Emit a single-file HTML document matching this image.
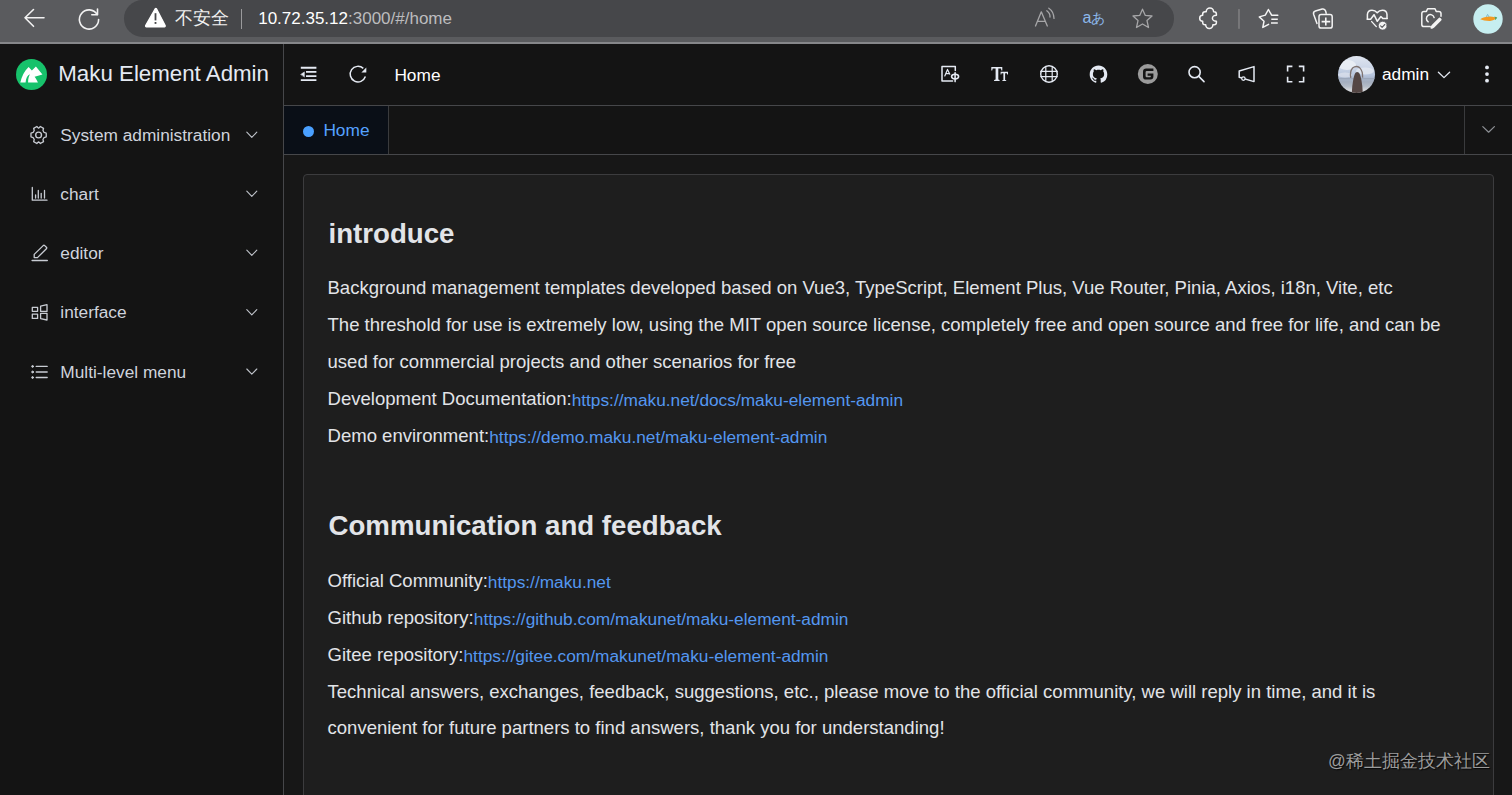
<!DOCTYPE html>
<html><head><meta charset="utf-8"><title>Maku Element Admin</title>
<style>
*{margin:0;padding:0;box-sizing:border-box}
html,body{width:1512px;height:795px;overflow:hidden;background:#141414}
body{position:relative;font-family:"Liberation Sans",sans-serif}
.a{position:absolute}
.t{position:absolute;white-space:nowrap}
svg{position:absolute;overflow:visible}
</style></head>
<body>
<div class="a" style="left:0;top:0;width:1512px;height:42px;background:#5a5b5e"></div>
<div class="a" style="left:0;top:42px;width:1512px;height:2px;background:#86878a"></div>
<svg style="left:0;top:0" width="1512" height="42" fill="none" stroke="#f2f2f2" stroke-width="1.6" stroke-linecap="round" stroke-linejoin="round"><path d="M25 17.8 H44 M25 17.8 L33.5 9.5 M25 17.8 L33.5 26.3"/><path d="M97.2 14.5 A9.6 9.6 0 1 0 98.6 19.5" /><path d="M97.5 9 V14.8 H91.8"/></svg>
<div class="a" style="left:124px;top:0px;width:1050px;height:36.8px;border-radius:18.4px;background:#46474a"></div>
<svg style="left:0;top:0" width="200" height="42"><path d="M155.3 8.6 Q155.8 8 156.4 8.6 L165.2 25.6 Q165.5 26.8 164.4 26.9 H146.4 Q145.3 26.8 145.6 25.6 Z" fill="#fff" stroke="#fff" stroke-width="1.2" stroke-linejoin="round"/><rect x="154.6" y="13.2" width="1.8" height="7.2" fill="#46474a"/><rect x="154.6" y="22" width="1.8" height="1.9" fill="#46474a"/></svg>
<div class="t" style="left:174.5px;top:6.46px;font-size:18px;line-height:25px;color:#f0f0f0;font-weight:normal;">不安全</div>
<div class="a" style="left:241px;top:9px;width:1.2px;height:19.5px;background:#9a9a9c"></div>
<div class="t" style="left:258.2px;top:7.21px;font-size:17px;line-height:24px;color:#bcbcbe;font-weight:normal;"><span style="color:#fff">10.72.35.12</span>:3000/#/home</div>
<svg style="left:0;top:0" width="1512" height="42" fill="none" stroke-linecap="round" stroke-linejoin="round"><path d="M1035.5 26 L1041.3 11.8 L1047.3 26 M1037.6 21.3 H1045.2" stroke="#a6a6a8" stroke-width="1.3"/><path d="M1046.8 10.8 Q1050.2 13.2 1050 17" stroke="#a6a6a8" stroke-width="1.3"/><path d="M1048.8 8.2 Q1053.8 11.6 1054 18.4" stroke="#a6a6a8" stroke-width="1.3"/><path d="M1142.5 9.2 L1145.3 15.4 L1152 16 L1147 20.6 L1148.5 27.5 L1142.5 24 L1136.5 27.5 L1138 20.6 L1133 16 L1139.7 15.4 Z" stroke="#a6a6a8" stroke-width="1.3"/><path d="M1202.7 14 Q1202.7 11.7 1205 11.7 H1206.2 A3.7 3.7 0 0 1 1213.6 11.7 H1214.1 Q1216.4 11.7 1216.4 14 V15.3 A4 3 0 0 0 1216.4 21.3 V22.5 Q1216.4 24.8 1214.1 24.8 H1212.9 A3.6 3.6 0 0 1 1205.7 24.8 H1205 Q1202.7 24.8 1202.7 22.5 V21.3 A3 3 0 0 1 1202.7 15.3 Z" stroke="#f4f4f4" stroke-width="1.5"/><path d="M1239 9.5 V28.3" stroke="#8a8a8c" stroke-width="1.2"/><path d="M1268.6 24.3 L1262.8 27.4 L1264 21.3 L1259.3 16.9 L1265.3 15.1 L1268.4 9.5 L1271.6 15.2 H1277.8" stroke="#f4f4f4" stroke-width="1.5"/><path d="M1271.3 19.2 H1277.8 M1271 23 H1277.8" stroke="#f4f4f4" stroke-width="1.6" stroke-linecap="butt"/><path d="M1317 23.4 L1313.6 14.2 Q1313 11.8 1315.4 11 L1322.2 9 Q1324.8 8.4 1325.6 11 L1326.2 13.2" stroke="#f4f4f4" stroke-width="1.5"/><rect x="1319" y="14.5" width="13.2" height="13.6" rx="2.2" stroke="#f4f4f4" stroke-width="1.5"/><path d="M1325.8 17.4 V25.6 M1321.6 21.6 H1330.2" stroke="#f4f4f4" stroke-width="1.6" stroke-linecap="butt"/><path d="M1367.4 19 V14.6 Q1367.6 10.2 1372 10.2 Q1375.2 10.2 1377.2 12.8 Q1379.2 10.2 1382.4 10.2 Q1386.8 10.2 1387 14.6 V18.6" stroke="#f4f4f4" stroke-width="1.5"/><path d="M1367.2 19.2 H1370.6 L1374 14.7 L1377.3 21.3 L1380.9 16.5 L1383 18.6 H1387.2" stroke="#f4f4f4" stroke-width="1.5"/><path d="M1371.7 21.6 L1376.3 26.6" stroke="#f4f4f4" stroke-width="1.4"/><circle cx="1382.7" cy="25.7" r="4.4" fill="#f4f4f4" stroke="#5a5b5e" stroke-width="0.8"/><path d="M1380.6 25.9 L1382.1 27.3 L1384.8 24.5" stroke="#5a5b5e" stroke-width="1.1"/><path d="M1430.2 26.6 H1424 Q1421.8 26.6 1421.8 24.4 V13.6 Q1421.8 11.4 1424 11.4 H1426.4 L1427.6 8.8 H1435 L1436.2 11.4 H1438.8 Q1441 11.4 1441 13.6 V16.2" stroke="#f4f4f4" stroke-width="1.5"/><path d="M1428.2 21.8 A3.9 3.9 0 1 1 1434.1 17.6" stroke="#f4f4f4" stroke-width="1.5"/><path d="M1439.6 18.8 L1432.6 25.8 L1431.6 27.6 L1433.4 26.6 L1440.4 19.6 Z" fill="#f4f4f4" stroke="#f4f4f4" stroke-width="2.4"/><circle cx="1488" cy="19" r="14.7" fill="#c6eef0"/><path d="M1480.2 19.2 Q1484 16.4 1490 16.4 Q1494.5 16.6 1495.8 18 Q1494.5 20.6 1490 20.9 Q1484 21 1480.2 19.2 Z" fill="#f39a22"/><path d="M1486.4 16.6 L1487.6 14.4 L1488.8 16.6" stroke="#6aa8c0" stroke-width="0.7"/><path d="M1494.8 17.2 L1496.6 17.6 L1495.6 19.4" fill="#4a9a50" stroke="#4a9a50" stroke-width="0.8"/></svg>
<div class="t" style="left:1082.6px;top:6.86px;font-size:16px;line-height:22px;color:#8cb8ea;font-weight:normal;">a</div>
<div class="t" style="left:1090.8px;top:9.22px;font-size:13.5px;line-height:19px;color:#8cb8ea;font-weight:normal;">あ</div>
<div class="a" style="left:0;top:44px;width:283px;height:751px;background:#141414"></div>
<div class="a" style="left:283px;top:44px;width:1px;height:751px;background:#46474a"></div>
<div class="a" style="left:284px;top:44px;width:1228px;height:61px;background:#141414"></div>
<div class="a" style="left:284px;top:105px;width:1228px;height:1px;background:#46474a"></div>
<div class="a" style="left:284px;top:106px;width:1228px;height:48px;background:#141414"></div>
<div class="a" style="left:284px;top:106px;width:104px;height:48px;background:#0a0f17"></div>
<div class="a" style="left:388px;top:106px;width:1px;height:48px;background:#3a3b3d"></div>
<div class="a" style="left:1464px;top:106px;width:1px;height:48px;background:#3a3b3d"></div>
<div class="a" style="left:284px;top:154px;width:1228px;height:1px;background:#46474a"></div>
<div class="a" style="left:284px;top:155px;width:1228px;height:640px;background:#171717"></div>
<div class="a" style="left:303px;top:174px;width:1191px;height:700px;background:#1e1e1e;border:1px solid #3c3c3e;border-radius:4px"></div>
<svg style="left:15.6px;top:58.8px" width="31" height="31" viewBox="0 0 100 100"><circle cx="50" cy="50" r="50" fill="#17c26b"/><path d="M13.9 76.2 C18 57 27 38 40.7 25.9 L51.2 37.2 L64.2 24.3 L85.3 50.2 L60 57.5 C64 63 68 70 70.7 76.2 L39 76.2 C39 65 41 55 45.5 49.4 C37 52 32 62 30.9 76.2 Z" fill="#fff"/></svg>
<div class="t" style="left:58.3px;top:58.07px;font-size:22.3px;line-height:31px;color:#e5eaf3;font-weight:normal;">Maku Element Admin</div>
<div class="t" style="left:60.3px;top:122.81px;font-size:17.3px;line-height:24px;color:#cfd3dc;font-weight:normal;">System administration</div>
<svg style="left:0;top:0" width="283" height="795"><path d="M246.8 132.2 L251.8 137.4 L256.8 132.2" fill="none" stroke="#bfc3ca" stroke-width="1.1" stroke-linecap="round" stroke-linejoin="round"/></svg>
<div class="t" style="left:60.3px;top:181.81px;font-size:17.3px;line-height:24px;color:#cfd3dc;font-weight:normal;">chart</div>
<svg style="left:0;top:0" width="283" height="795"><path d="M246.8 191.2 L251.8 196.4 L256.8 191.2" fill="none" stroke="#bfc3ca" stroke-width="1.1" stroke-linecap="round" stroke-linejoin="round"/></svg>
<div class="t" style="left:60.3px;top:240.81px;font-size:17.3px;line-height:24px;color:#cfd3dc;font-weight:normal;">editor</div>
<svg style="left:0;top:0" width="283" height="795"><path d="M246.8 250.2 L251.8 255.4 L256.8 250.2" fill="none" stroke="#bfc3ca" stroke-width="1.1" stroke-linecap="round" stroke-linejoin="round"/></svg>
<div class="t" style="left:60.3px;top:300.31px;font-size:17.3px;line-height:24px;color:#cfd3dc;font-weight:normal;">interface</div>
<svg style="left:0;top:0" width="283" height="795"><path d="M246.8 309.7 L251.8 314.9 L256.8 309.7" fill="none" stroke="#bfc3ca" stroke-width="1.1" stroke-linecap="round" stroke-linejoin="round"/></svg>
<div class="t" style="left:60.3px;top:359.61px;font-size:17.3px;line-height:24px;color:#cfd3dc;font-weight:normal;">Multi-level menu</div>
<svg style="left:0;top:0" width="283" height="795"><path d="M246.8 369.0 L251.8 374.2 L256.8 369.0" fill="none" stroke="#bfc3ca" stroke-width="1.1" stroke-linecap="round" stroke-linejoin="round"/></svg>
<svg style="left:0;top:0" width="283" height="795" fill="none" stroke-linecap="round" stroke-linejoin="round"><g transform="translate(38.6 135)" stroke="#c8ccd3" stroke-width="1.4"><path d="M-2 -8.2 H2 L2.7 -5.9 L4.8 -4.7 L7.1 -5.3 L9.1 -1.9 L7.4 -0.2 L7.4 0.2 L9.1 1.9 L7.1 5.3 L4.8 4.7 L2.7 5.9 L2 8.2 H-2 L-2.7 5.9 L-4.8 4.7 L-7.1 5.3 L-9.1 1.9 L-7.4 0.2 L-7.4 -0.2 L-9.1 -1.9 L-7.1 -5.3 L-4.8 -4.7 L-2.7 -5.9 Z" transform="rotate(90) scale(0.93)"/><circle r="2.9"/></g><path d="M32.3 187.5 V200.2 H47" stroke="#c8ccd3" stroke-width="1.3"/><path d="M35.6 195 V198 M38.3 190.5 V198 M41.2 193.3 V198 M44.5 190.5 V198" stroke="#c8ccd3" stroke-width="1.3"/><path d="M34.2 257.6 V254.4 L43.2 245.6 Q44 244.9 44.7 245.6 L46.4 247.3 Q47.1 248 46.4 248.7 L37.5 257.6 Z" stroke="#c8ccd3" stroke-width="1.3"/><path d="M32.2 260.5 H47.2" stroke="#c8ccd3" stroke-width="1.6"/><path d="M32.3 307.4 H37.6 V311.3 H32.3 Z M32.3 314.2 H37.6 V318.4 H32.3 Z M40.6 306.2 L47 304.7 V311.4 H40.6 Z M40.6 313.4 H47 V320 L40.6 318.6 Z" stroke="#c8ccd3" stroke-width="1.3"/><path d="M36.2 366.4 H47.2 M36.2 372 H47.2 M36.2 377.5 H47.2" stroke="#c8ccd3" stroke-width="1.3"/><circle cx="32.6" cy="366.4" r="0.9" fill="#c8ccd3" stroke="#c8ccd3"/><circle cx="32.6" cy="372" r="0.9" fill="#c8ccd3" stroke="#c8ccd3"/><circle cx="32.6" cy="377.5" r="0.9" fill="#c8ccd3" stroke="#c8ccd3"/></svg>
<svg style="left:0;top:0" width="1512" height="110" fill="none" stroke-linecap="round" stroke-linejoin="round"><path d="M300.8 67.8 H316.4 M306 71.9 H316.4 M306 76.1 H316.4 M300.8 80.1 H316.4" stroke="#e5eaf3" stroke-width="1.9" stroke-linecap="butt"/><path d="M300.9 74.3 L304.4 71.9 V76.7 Z" fill="#e5eaf3" stroke="#e5eaf3" stroke-width="0.5"/><path d="M363.3 68.4 A7.8 7.8 0 1 0 365.4 76.6" stroke="#e5eaf3" stroke-width="1.5" stroke-linecap="butt"/><path d="M366.3 67.4 V72.4 H361.4 Z" fill="#e5eaf3"/></svg>
<div class="t" style="left:394.4px;top:62.61px;font-size:17.3px;line-height:24px;color:#ffffff;font-weight:normal;">Home</div>
<svg style="left:0;top:0" width="1512" height="110" fill="none" stroke-linecap="round" stroke-linejoin="round"><path d="M952.6 81.1 H942 V66.6 H955.3 V70.4" stroke="#e5eaf3" stroke-width="1.5"/><path d="M944.8 76 L947.5 69.4 L949.8 74.2 M945.8 73.6 H948.6" stroke="#e5eaf3" stroke-width="1.2"/><ellipse cx="955.1" cy="76.6" rx="3.5" ry="2.3" stroke="#e5eaf3" stroke-width="1.6"/><path d="M955.1 72.8 V81.6" stroke="#e5eaf3" stroke-width="1.6"/><circle cx="1049" cy="74" r="8.3" stroke="#e5eaf3" stroke-width="1.4"/><path d="M1040.8 71.4 H1057.2 M1040.8 76.6 H1057.2" stroke="#e5eaf3" stroke-width="1.2"/><path d="M1045.8 66.6 V81.4 M1052.2 66.6 V81.4" stroke="#e5eaf3" stroke-width="1.2"/><circle cx="1194.6" cy="72.2" r="5.6" stroke="#e5eaf3" stroke-width="1.6"/><path d="M1198.8 76.4 L1204 81.6" stroke="#e5eaf3" stroke-width="1.6"/><path d="M1239.2 71 L1254 66.6 V81.6 L1239.2 77.2 Z" stroke="#e5eaf3" stroke-width="1.5"/><circle cx="1243.4" cy="78.6" r="1.7" fill="#141414" stroke="#e5eaf3" stroke-width="1.3"/><path d="M1287.6 71.4 V66.4 H1292.4 M1298.8 66.4 H1303.6 V71.4 M1303.6 76.8 V81.8 H1298.8 M1292.4 81.8 H1287.6 V76.8" stroke="#e5eaf3" stroke-width="1.6" stroke-linecap="butt" stroke-linejoin="miter"/><path d="M1438.4 72.2 L1444 77.6 L1449.6 72.2" stroke="#e5eaf3" stroke-width="1.3"/><circle cx="1487" cy="67.4" r="1.9" fill="#e5eaf3"/><circle cx="1487" cy="74.1" r="1.9" fill="#e5eaf3"/><circle cx="1487" cy="80.7" r="1.9" fill="#e5eaf3"/><path d="M1482.8 126.6 L1488.6 132.2 L1494.4 126.6" stroke="#8d9095" stroke-width="1.2"/></svg>
<svg style="left:0;top:0" width="1512" height="110"><path d="M991.3 67 H1002.3 V70.4 H1001.4 L1000.9 68.6 H998.3 V79.6 L999.6 80.1 V81 H994.1 V80.1 L995.6 79.6 V68.6 H992.7 L992.2 70.4 H991.3 Z" fill="#e5eaf3"/><path d="M1000.6 71.8 H1008 V74.6 H1007.2 L1006.9 73.3 H1005.1 V79.9 L1006.2 80.2 V81 H1002.3 V80.2 L1003.4 79.9 V73.3 H1001.6 L1001.3 74.6 H1000.6 Z" fill="#e5eaf3"/><g transform="translate(1089.7 65.6) scale(1.1)"><path fill="#e5eaf3" d="M8 0C3.58 0 0 3.58 0 8c0 3.54 2.29 6.53 5.47 7.59.4.07.55-.17.55-.38 0-.19-.01-.82-.01-1.49-2.01.37-2.53-.49-2.69-.94-.09-.23-.48-.94-.82-1.13-.28-.15-.68-.52-.01-.53.63-.01 1.08.58 1.23.82.72 1.21 1.87.87 2.33.66.07-.52.28-.87.51-1.07-1.78-.2-3.64-.89-3.64-3.95 0-.87.31-1.59.82-2.15-.08-.2-.36-1.02.08-2.12 0 0 .67-.21 2.2.82.64-.18 1.32-.27 2-.27.68 0 1.36.09 2 .27 1.53-1.04 2.2-.82 2.2-.82.44 1.1.16 1.92.08 2.12.51.56.82 1.27.82 2.15 0 3.07-1.87 3.75-3.65 3.95.29.25.54.73.54 1.48 0 1.07-.01 1.93-.01 2.2 0 .21.15.46.55.38A8.013 8.013 0 0016 8c0-4.42-3.58-8-8-8z"/></g><circle cx="1147.8" cy="74" r="10" fill="#9b9b9b"/><path d="M1153.4 68.6 H1146.2 Q1143 68.6 1143 71.8 V76.4 Q1143 79.6 1146.2 79.6 H1150.4 Q1153.4 79.6 1153.4 76.6 V73.6 H1147.6 V75.8 H1150.8 V76.6 Q1150.8 77.2 1150.2 77.2 H1146.8 Q1145.6 77.2 1145.6 76 V72.2 Q1145.6 71 1146.8 71 H1153.4 Z" fill="#141414"/></svg>
<div class="a" style="left:1337.8px;top:55.9px;width:37px;height:37px;border-radius:50%;overflow:hidden;background:linear-gradient(180deg,#dfe5ef 0%,#cdd7e8 30%,#b7c5dd 52%,#aab6cc 61%,#a4aebe 70%,#b4bcc8 82%,#d6d8dc 92%,#cfd0d4 100%)"><svg style="left:0;top:0;filter:blur(0.4px)" width="37" height="37"><ellipse cx="9" cy="9" rx="9" ry="5" fill="#eef1f6" opacity="0.8"/><ellipse cx="27" cy="15" rx="9" ry="3.5" fill="#e8edf4" opacity="0.7"/><ellipse cx="7" cy="19" rx="7" ry="2.5" fill="#e4e8f0" opacity="0.6"/><path d="M0 22.7 H37" stroke="#939eb0" stroke-width="0.8"/><path d="M13.8 37 Q14 30 15.2 24 Q16.2 18 17.8 16.4 Q19.2 15.4 20.6 16.4 Q22.4 18 23.4 24 Q24.6 30 24.8 37 Z" fill="#544644"/><path d="M12.8 21.8 Q11.6 15.6 14.6 12 Q18 9.2 21.6 11.6 Q24.9 14.8 24.6 21.6" fill="none" stroke="#7f7472" stroke-width="1.3"/></svg></div>
<div class="t" style="left:1382px;top:62.11px;font-size:17.3px;line-height:24px;color:#ffffff;font-weight:normal;">admin</div>
<div class="a" style="left:302.7px;top:125.7px;width:11px;height:11px;border-radius:50%;background:#4aa0ff"></div>
<div class="t" style="left:323.4px;top:118.21px;font-size:17.3px;line-height:24px;color:#55a2ff;font-weight:normal;">Home</div>
<div class="t" style="left:328.5px;top:214.22px;font-size:27.65px;line-height:39px;color:#e2e4e8;font-weight:bold;">introduce</div>
<div class="t" style="left:327.5px;top:274.87px;font-size:18.55px;line-height:26px;color:#e2e4e8;font-weight:normal;">Background management templates developed based on Vue3, TypeScript, Element Plus, Vue Router, Pinia, Axios, i18n, Vite, etc</div>
<div class="t" style="left:327.5px;top:311.87px;font-size:18.55px;line-height:26px;color:#e2e4e8;font-weight:normal;">The threshold for use is extremely low, using the MIT open source license, completely free and open source and free for life, and can be</div>
<div class="t" style="left:327.5px;top:348.87px;font-size:18.55px;line-height:26px;color:#e2e4e8;font-weight:normal;">used for commercial projects and other scenarios for free</div>
<div class="t" style="left:327.5px;top:385.87px;font-size:18.55px;line-height:26px;color:#e2e4e8;font-weight:normal;">Development Documentation:<span style="color:#5497f0;font-size:17.3px;position:relative;top:1px">https://maku.net/docs/maku-element-admin</span></div>
<div class="t" style="left:327.5px;top:422.87px;font-size:18.55px;line-height:26px;color:#e2e4e8;font-weight:normal;">Demo environment:<span style="color:#5497f0;font-size:17.3px;position:relative;top:1px">https://demo.maku.net/maku-element-admin</span></div>
<div class="t" style="left:328.5px;top:506.42px;font-size:27.65px;line-height:39px;color:#e2e4e8;font-weight:bold;">Communication and feedback</div>
<div class="t" style="left:327.5px;top:567.67px;font-size:18.55px;line-height:26px;color:#e2e4e8;font-weight:normal;">Official Community:<span style="color:#5497f0;font-size:17.3px;position:relative;top:1px">https://maku.net</span></div>
<div class="t" style="left:327.5px;top:604.62px;font-size:18.55px;line-height:26px;color:#e2e4e8;font-weight:normal;">Github repository:<span style="color:#5497f0;font-size:17.3px;position:relative;top:1px">https://github.com/makunet/maku-element-admin</span></div>
<div class="t" style="left:327.5px;top:641.57px;font-size:18.55px;line-height:26px;color:#e2e4e8;font-weight:normal;">Gitee repository:<span style="color:#5497f0;font-size:17.3px;position:relative;top:1px">https://gitee.com/makunet/maku-element-admin</span></div>
<div class="t" style="left:327.5px;top:678.52px;font-size:18.55px;line-height:26px;color:#e2e4e8;font-weight:normal;">Technical answers, exchanges, feedback, suggestions, etc., please move to the official community, we will reply in time, and it is</div>
<div class="t" style="left:327.5px;top:715.47px;font-size:18.55px;line-height:26px;color:#e2e4e8;font-weight:normal;">convenient for future partners to find answers, thank you for understanding!</div>
<div class="t" style="left:1328px;top:749.44px;font-size:17.5px;line-height:24px;color:#9c9c9c;font-weight:normal;text-shadow:1px 1px 1px rgba(0,0,0,0.8)">@稀土掘金技术社区</div>

</body></html>
